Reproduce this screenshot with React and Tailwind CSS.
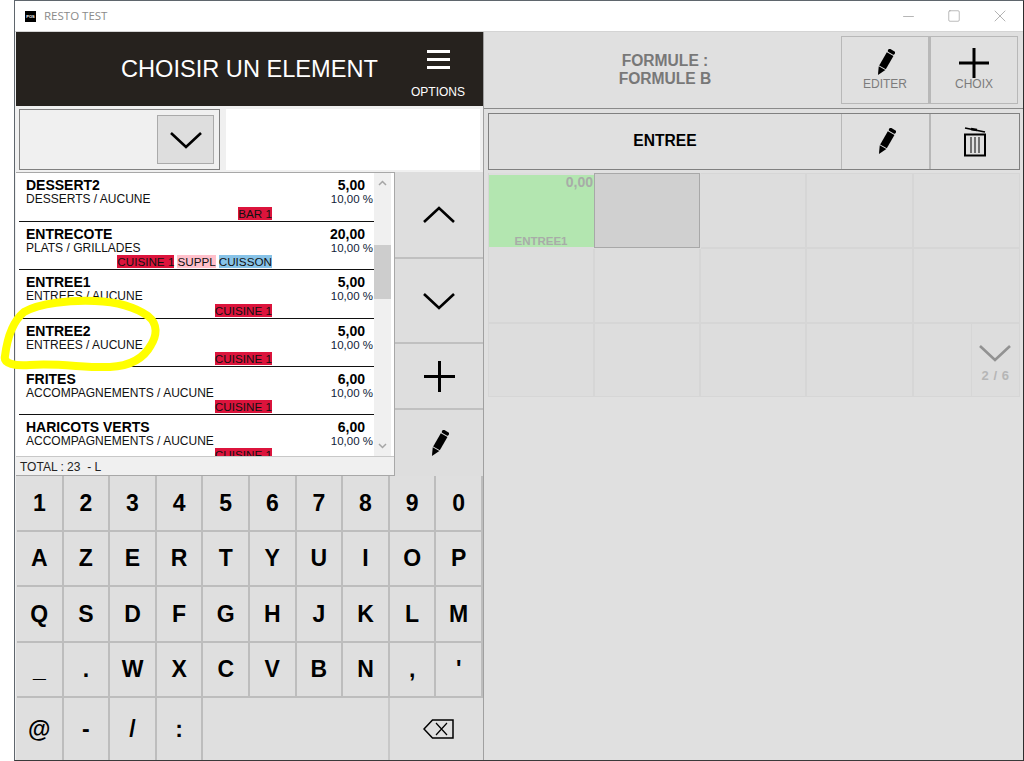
import { X, Minus, Square } from 'lucide-react';

const FONT = "font-['Liberation_Sans',Arial,sans-serif]";

const rows = [
    { name: 'DESSERT2', sub: 'DESSERTS / AUCUNE', price: '5,00', h: 'h-[49px]', tags: [['BAR 1', 'red']] },
    { name: 'ENTRECOTE', sub: 'PLATS / GRILLADES', price: '20,00', h: 'h-[48px]', tags: [['CUISINE 1', 'red'], ['SUPPL', 'pink'], ['CUISSON', 'blue']] },
    { name: 'ENTREE1', sub: 'ENTREES / AUCUNE', price: '5,00', h: 'h-[49px]', tags: [['CUISINE 1', 'red']] },
    { name: 'ENTREE2', sub: 'ENTREES / AUCUNE', price: '5,00', h: 'h-[48px]', tags: [['CUISINE 1', 'red']] },
    { name: 'FRITES', sub: 'ACCOMPAGNEMENTS / AUCUNE', price: '6,00', h: 'h-[48px]', tags: [['CUISINE 1', 'red']] },
    { name: 'HARICOTS VERTS', sub: 'ACCOMPAGNEMENTS / AUCUNE', price: '6,00', h: 'h-[48px]', tags: [['CUISINE 1', 'red']] },
];

const tagColors = {
    red: 'bg-[#dc143c]',
    pink: 'bg-[#ffc0cb]',
    blue: 'bg-[#87c3e8]',
};

const keyRows = [
    { h: 'h-[56px]', keys: '1234567890'.split('') },
    { h: 'h-[55px]', keys: 'AZERTYUIOP'.split('') },
    { h: 'h-[56px]', keys: 'QSDFGHJKLM'.split('') },
    { h: 'h-[55px]', keys: ['_', '.', 'W', 'X', 'C', 'V', 'B', 'N', ',', "'"] },
];

const Chevron = ({ up, className = '', color = '#000' }) => (
    <svg width="32" height="18" viewBox="0 0 32 18" className={className}>
        <polyline
            points={up ? '1,16 16,2 31,16' : '1,2 16,16 31,2'}
            fill="none"
            stroke={color}
            strokeWidth="2.6"
        />
    </svg>
);

const Pencil = () => (
    <svg width="20" height="27" viewBox="0 0 22 30">
        <g transform="rotate(30 11 15)" fill="#000">
            <rect x="7" y="-1" width="8.5" height="4" rx="1.5" />
            <rect x="7" y="4" width="8.5" height="17" />
            <polygon points="7,22 15.5,22 11.2,31" />
        </g>
    </svg>
);

const Plus = ({ size = 32, weight = 3 }) => (
    <svg width={size} height={size} viewBox={`0 0 ${size} ${size}`}>
        <rect x={size / 2 - weight / 2} y="0" width={weight} height={size} fill="#000" />
        <rect x="0" y={size / 2 - weight / 2} width={size} height={weight} fill="#000" />
    </svg>
);

const Trash = () => (
    <svg width="22" height="30" viewBox="0 0 22 30">
        <line x1="1" y1="1" x2="21" y2="5" stroke="#000" strokeWidth="1.6" />
        <line x1="7" y1="2" x2="13" y2="3" stroke="#000" strokeWidth="2.4" />
        <rect x="1" y="7.5" width="20" height="21" fill="none" stroke="#000" strokeWidth="2" />
        <line x1="7" y1="10" x2="7" y2="26" stroke="#000" strokeWidth="1" />
        <line x1="11" y1="10" x2="11" y2="26" stroke="#000" strokeWidth="1" />
        <line x1="15" y1="10" x2="15" y2="26" stroke="#000" strokeWidth="1" />
    </svg>
);

const Backspace = () => (
    <svg width="31" height="20" viewBox="0 0 31 20">
        <path d="M30 1H9.500L1 10l8.500 9H30z" fill="none" stroke="#000" strokeWidth="1.500" />
        <path d="M13 4l11 12M24 4L13 16" fill="none" stroke="#000" strokeWidth="1.200" />
    </svg>
);

const ListRow = ({ row }) => (
    <div className={`${row.h} shrink-0 w-[355px] ml-[3px] border-b border-[#111] pl-[7px] pr-px pt-[5px] flex flex-col`}>
        <div className="flex justify-between items-start h-[14px] pr-[8px]">
            <span className="text-[14px] leading-[15px] font-bold text-black">{row.name}</span>
            <span className="text-[14px] leading-[15px] font-bold text-black">{row.price}</span>
        </div>
        <div className="flex justify-between items-start h-[14px]">
            <span className="text-[12px] leading-[14px] text-[#111]">{row.sub}</span>
            <span className="text-[11.5px] leading-[14px] text-[#101c38]">10,00 %</span>
        </div>
        <div className="flex justify-end gap-[3px] pr-[101px] mt-auto mb-px">
            {row.tags.map(([label, color]) => (
                <span key={label} className={`${tagColors[color]} text-[11.7px] leading-[13px] text-[#111]`}>{label}</span>
            ))}
        </div>
    </div>
);

const Scrollbar = () => (
    <div className="w-[17px] bg-[#f0f0f0] flex flex-col items-center shrink-0">
        <svg width="9" height="6" viewBox="0 0 9 6" className="mt-[7px]">
            <polyline points="1,5 4.500,1.500 8,5" fill="none" stroke="#a6a6a6" strokeWidth="1.500" />
        </svg>
        <div className="w-[17px] h-[54px] mt-[59px] bg-[#cdcdcd]" />
        <svg width="9" height="6" viewBox="0 0 9 6" className="mt-auto mb-[7px]">
            <polyline points="1,1 4.500,4.500 8,1" fill="none" stroke="#a6a6a6" strokeWidth="1.500" />
        </svg>
    </div>
);

const App = () => {
    const cells = Array.from({ length: 15 });

    return (
        <div className={`relative w-[1024px] h-[761px] bg-white pl-[14px] overflow-hidden ${FONT}`}>
            <div className="w-[1010px] h-[761px] border-t border-l border-r border-b border-[#5f666d] border-r-[#2d2d2d] border-b-[#3a3a3a] flex flex-col">
                {/* Title bar */}
                <div className="h-[31px] shrink-0 bg-white border-b border-[#d4d4d4] flex items-center pl-[10px]">
                    <div className="w-[11px] h-[11px] bg-black text-white text-[4px] leading-[11px] text-center font-bold mt-[1px]">POS</div>
                    <span className="ml-[8px] text-[11.5px] text-[#8a8a8a] font-['Open_Sans',sans-serif]">RESTO TEST</span>
                    <div className="ml-auto flex items-center text-[#8c8c8c] mr-[13px]">
                        <Minus size={17} strokeWidth={0.9} />
                        <Square size={14} strokeWidth={1} className="ml-[30px]" />
                        <X size={20} strokeWidth={0.8} className="ml-[29px]" />
                    </div>
                </div>

                <div className="flex flex-1 min-h-0">
                    {/* Left pane */}
                    <div className="w-[469px] shrink-0 bg-[#f0f0f0] pl-px flex flex-col border-r border-[#a0a0a0]">
                        <div className="h-[74px] shrink-0 bg-[#26221e] text-white flex">
                            <div className="flex-1 pl-[105px] pt-[22px] text-[23.6px] leading-[30px]">CHOISIR UN ELEMENT</div>
                            <div className="w-[72px] mr-[9px] flex flex-col items-center pt-[18px]">
                                <div className="w-[23px] flex flex-col gap-[5px]">
                                    <div className="h-[3px] bg-white" />
                                    <div className="h-[3px] bg-white" />
                                    <div className="h-[3px] bg-white" />
                                </div>
                                <div className="text-[12px] leading-[14px] mt-[16px]">OPTIONS</div>
                            </div>
                        </div>

                        <div className="h-[66px] shrink-0 flex pt-[3px] pl-[3px] pr-[3px] gap-[6px]">
                            <div className="w-[201px] h-[61px] border border-[#808080] flex items-center justify-end pr-[5px]">
                                <div className="w-[57px] h-[49px] bg-[#dedede] border border-[#aaaaaa] flex items-center justify-center">
                                    <Chevron />
                                </div>
                            </div>
                            <div className="flex-1 h-[61px] bg-white" />
                        </div>

                        <div className="h-[304px] shrink-0 flex">
                            <div className="w-[379px] shrink-0 border-t border-r border-b border-[#a8a8a8] flex flex-col">
                                <div className="h-[283px] shrink-0 bg-white flex overflow-hidden">
                                    <div className="flex flex-col">
                                        {rows.map((row) => <ListRow key={row.name} row={row} />)}
                                    </div>
                                    <Scrollbar />
                                </div>
                                <div className="flex-1 border-t border-[#c8c8c8] pl-[4px] pt-[3px] text-[12px] leading-[14px] text-[#222] whitespace-pre">TOTAL : 23  - L</div>
                            </div>
                            <div className="flex-1 bg-[#dedede] flex flex-col">
                                <div className="h-[87px] border-b-2 border-[#c0c0c0] flex items-center justify-center"><Chevron up /></div>
                                <div className="h-[85px] border-b-2 border-[#c0c0c0] flex items-center justify-center"><Chevron /></div>
                                <div className="h-[66px] border-b-2 border-[#c0c0c0] flex items-center justify-center"><Plus size={31} weight={3} /></div>
                                <div className="flex-1 flex items-center justify-center"><Pencil /></div>
                            </div>
                        </div>

                        {/* Keyboard */}
                        <div className="flex-1 bg-[#dfdfdf] pl-px flex flex-col">
                            {keyRows.map((keyRow, i) => (
                                <div key={i} className={`${keyRow.h} grid grid-cols-10 shrink-0`}>
                                    {keyRow.keys.map((k) => (
                                        <div key={k} className="border-r-2 border-b-2 border-[#bdbdbd] flex items-center justify-center text-[23px] font-bold text-black">{k}</div>
                                    ))}
                                </div>
                            ))}
                            <div className="flex-1 grid grid-cols-10">
                                {['@', '-', '/', ':'].map((k) => (
                                    <div key={k} className="border-r-2 border-[#bdbdbd] flex items-center justify-center text-[23px] font-bold text-black">{k}</div>
                                ))}
                                <div className="col-span-4 border-r-2 border-[#c8c8c8]" />
                                <div className="col-span-2 flex items-center justify-center pl-[4px]"><Backspace /></div>
                            </div>
                        </div>
                    </div>

                    {/* Right pane */}
                    <div className="flex-1 bg-[#e0e0e0] flex flex-col">
                        <div className="h-[77px] shrink-0 border-b border-[#8a8a8a] flex pt-[4px] pr-[5px]">
                            <div className="flex-1 text-center text-[15.6px] leading-[18px] font-bold text-[#787878] pt-[16px] pl-[5px]">
                                <div>FORMULE :</div>
                                <div>FORMULE B</div>
                            </div>
                            <div className="w-[88px] h-[68px] border border-[#b8b8b8] flex flex-col items-center pt-[12px]">
                                <Pencil />
                                <span className="text-[12px] leading-[14px] text-[#7c7c7c] mt-[1px]">EDITER</span>
                            </div>
                            <div className="w-[89px] h-[68px] border border-l-2 border-[#b8b8b8] flex flex-col items-center pt-[11px]">
                                <Plus size={30} weight={3} />
                                <span className="text-[12px] leading-[14px] text-[#7c7c7c] mt-[-1px]">CHOIX</span>
                            </div>
                        </div>

                        <div className="h-[57px] shrink-0 mt-[4px] ml-[4px] mr-[3px] border border-[#808080] flex">
                            <div className="flex-1 text-center text-[15.6px] leading-[53px] font-bold text-black">ENTREE</div>
                            <div className="w-[88px] border-l border-[#b8b8b8] flex items-center justify-center"><Pencil /></div>
                            <div className="w-[90px] border-l-2 border-[#b8b8b8] flex items-center justify-center"><Trash /></div>
                        </div>

                        <div className="grid grid-cols-[106px_106px_106px_107px_105px] mt-[3px] ml-[4px] mr-[3px] h-[224px] grid-rows-[76px_75px_72px] border-x border-b border-[#d6d6d6] bg-[#dddddd]">
                            {cells.map((_, i) => {
                                if (i === 0) {
                                    return (
                                        <div key={i} className="bg-[#b3e6b0] mt-[2px] mb-[2px] mr-px flex flex-col justify-between pr-px text-right text-[#a8aca8] font-bold">
                                            <span className="text-[14px] leading-[15px]">0,00</span>
                                            <span className="text-[11.5px] leading-[11px] text-center">ENTREE1</span>
                                        </div>
                                    );
                                }
                                if (i === 1) {
                                    return <div key={i} className="bg-[#d0d0d0] border border-[#a8a8a8] -ml-px mr-px mb-px" />;
                                }
                                if (i === 14) {
                                    return (
                                        <div key={i} className="flex justify-end">
                                            <div className="w-[48px] border-l border-[#d6d6d6] flex flex-col items-center pt-[20px]">
                                                <Chevron color="#929292" className="-ml-px" />
                                                <span className="text-[13px] leading-[15px] font-bold text-[#b6b6b6] mt-[6px] tracking-[0.5px]">2 / 6</span>
                                            </div>
                                        </div>
                                    );
                                }
                                return <div key={i} className={`${(i + 1) % 5 === 0 ? '' : 'border-r-2'} ${i < 10 ? 'border-b-2' : ''} ${i < 5 ? 'border-t' : ''} border-[#d6d6d6]`} />;
                            })}
                        </div>
                    </div>
                </div>
            </div>

            {/* Highlighter scribble */}
            <svg className="absolute left-0 top-[295px] pointer-events-none" width="170" height="85" viewBox="0 295 170 85">
                <path
                    d="M24 312C40 303 70 300 95 301C120 302 135 307 148 316C158 324 157 335 151 345C144 358 130 366 110 367C85 368 60 363 30 365C15 366 3 364 5 356C7 340 12 322 24 312Z"
                    fill="none"
                    stroke="#ffff00"
                    strokeWidth="8"
                    strokeLinejoin="round"
                />
            </svg>
        </div>
    );
};

export default App;
